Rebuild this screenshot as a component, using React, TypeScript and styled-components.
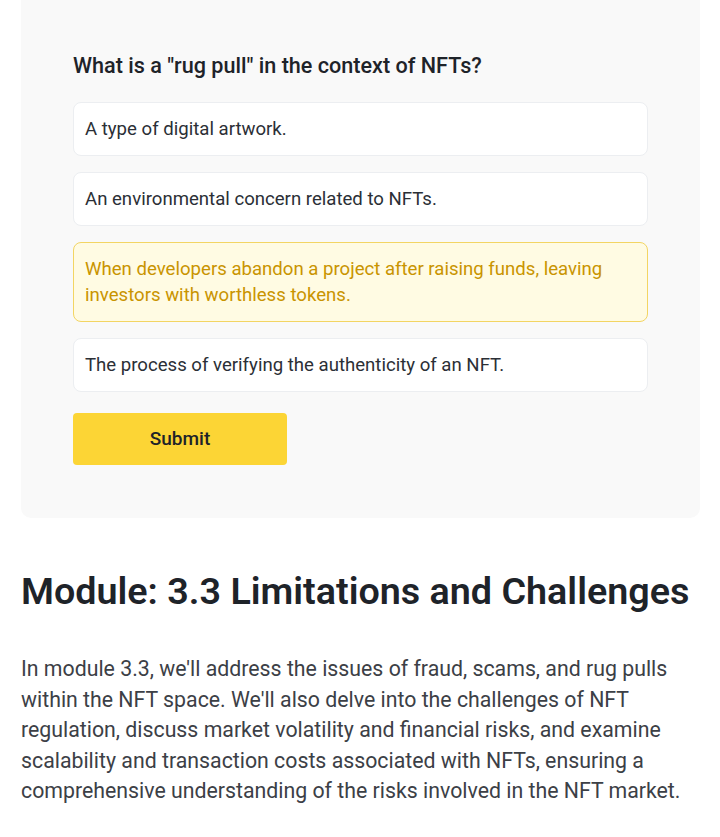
import React from "react";
import styled, { createGlobalStyle } from "styled-components";

const Global = createGlobalStyle`
  html, body { margin: 0; padding: 0; background: #ffffff; }
  body { font-family: Roboto, "Noto Sans", "Liberation Sans", sans-serif; color: #1e2329; }
  * { box-sizing: border-box; }
`;

const Page = styled.div`
  padding: 0 20px 40px 21px;
`;

const QuizCard = styled.section`
  background: #f9f9f9;
  border-radius: 0 0 10px 10px;
  padding: 52px 52px 53px;
  display: flex;
  flex-direction: column;
`;

const Question = styled.h3`
  margin: 0 0 22px;
  font-size: 21.6px;
  line-height: 28px;
  font-weight: 500;
  color: #1e2329;
`;

const Options = styled.div`
  display: flex;
  flex-direction: column;
  gap: 16px;
`;

const Option = styled.div<{ $selected?: boolean }>`
  background: ${(p) => (p.$selected ? "#fffbe3" : "#ffffff")};
  border: 1px solid ${(p) => (p.$selected ? "#f3d563" : "#eceef1")};
  border-radius: 8px;
  padding: 13px 11px;
  font-size: 18.6px;
  line-height: 26px;
  color: ${(p) => (p.$selected ? "#c99400" : "#2b2f36")};
  cursor: pointer;
`;

const SubmitButton = styled.button`
  margin-top: 21px;
  width: 214px;
  height: 52px;
  border: none;
  border-radius: 4px;
  background: #fcd535;
  color: #1e2329;
  font-family: inherit;
  font-size: 19px;
  font-weight: 500;
  padding: 0 0 1px;
  cursor: pointer;
`;

const Heading = styled.h2`
  margin: 49px 0 0;
  font-size: 37.7px;
  line-height: 48px;
  font-weight: 600;
  color: #1e2329;
`;

const Paragraph = styled.p`
  margin: 39px 0 0;
  font-size: 21.3px;
  line-height: 30.6px;
  color: #3c4046;
`;

const options = [
  "A type of digital artwork.",
  "An environmental concern related to NFTs.",
  "When developers abandon a project after raising funds, leaving investors with worthless tokens.",
  "The process of verifying the authenticity of an NFT.",
];

export default function App() {
  return (
    <>
      <Global />
      <Page>
        <QuizCard>
          <Question>What is a "rug pull" in the context of NFTs?</Question>
          <Options>
            {options.map((o, i) => (
              <Option key={i} $selected={i === 2}>
                {o}
              </Option>
            ))}
          </Options>
          <SubmitButton>Submit</SubmitButton>
        </QuizCard>
        <Heading>Module: 3.3 Limitations and Challenges</Heading>
        <Paragraph>
          In module 3.3, we'll address the issues of fraud, scams, and rug pulls within the NFT space. We'll also
          delve into the challenges of NFT regulation, discuss market volatility and financial risks, and examine
          scalability and transaction costs associated with NFTs, ensuring a comprehensive understanding of the
          risks involved in the NFT market.
        </Paragraph>
      </Page>
    </>
  );
}
